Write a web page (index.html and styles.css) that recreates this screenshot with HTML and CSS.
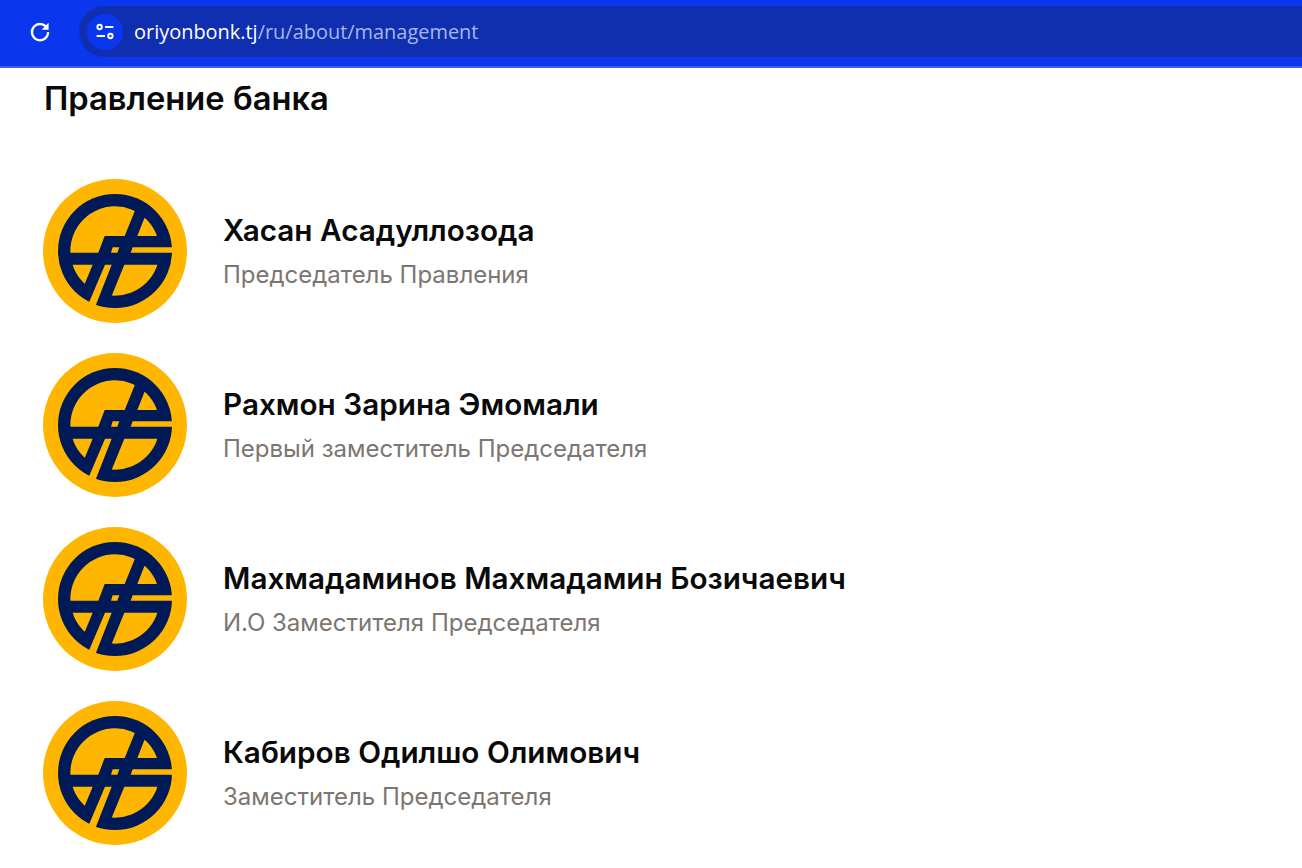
FILE: index.html
```html
<!DOCTYPE html>
<html lang="ru">
<head>
<meta charset="utf-8">
<title>Правление банка</title>
<link rel="stylesheet" href="styles.css">
</head>
<body>
<svg class="defs" width="0" height="0" aria-hidden="true">
  <defs>
    <clipPath id="inner"><circle cx="255" cy="243" r="134"/></clipPath>
    <symbol id="logo" viewBox="39 27 432 432">
      <circle cx="255" cy="243" r="216" fill="#ffb600"/>
      <circle cx="255" cy="243" r="171" fill="#001a57"/>
      <g fill="#ffb600" clip-path="url(#inner)">
        <polygon points="100,100 336,70 284,198 224,198 205,248 100,248"/>
        <polygon points="343,145 420,100 420,198 322,198"/>
        <polygon points="100,284 188,284 165,340 100,400"/>
        <polygon points="283,284 420,284 420,420 210,420 246,375"/>
      </g>
      <g fill="#ffb600">
        <polygon points="248,232 268,232 262,248 243,248"/>
        <polygon points="225,284 245,284 195,412 176,400"/>
        <polygon points="308,232 430,232 430,248 302,248"/>
      </g>
    </symbol>
  </defs>
</svg>
<header class="toolbar">
  <svg class="reload" viewBox="0 0 24 24" width="24" height="24" aria-hidden="true">
    <path d="M19.2 8.4A8.1 8.1 0 1 0 20.1 12" fill="none" stroke="#fff" stroke-width="2.3"/>
    <path d="M20.6 2.8V9.8H13.6Z" fill="#fff"/>
  </svg>
  <div class="omnibox">
    <span class="site-btn">
      <svg viewBox="0 0 20 20" width="20" height="20" aria-hidden="true">
        <circle cx="4.6" cy="5" r="2.2" fill="none" stroke="#fff" stroke-width="1.9"/>
        <path d="M10 5h8.4M1.6 14H10" stroke="#fff" stroke-width="2.1" fill="none"/>
        <circle cx="15.4" cy="14" r="2.2" fill="none" stroke="#fff" stroke-width="1.9"/>
      </svg>
    </span>
    <span class="url"><span class="host">oriyonbonk.tj</span>/ru/about/management</span>
  </div>
</header>
<main class="page">
  <h1 class="title">Правление банка</h1>
  <ul class="people">
    <li class="person">
      <svg class="avatar" aria-hidden="true"><use href="#logo"/></svg>
      <div class="info"><div class="name">Хасан Асадуллозода</div><div class="role">Председатель Правления</div></div>
    </li>
    <li class="person">
      <svg class="avatar" aria-hidden="true"><use href="#logo"/></svg>
      <div class="info"><div class="name">Рахмон Зарина Эмомали</div><div class="role">Первый заместитель Председателя</div></div>
    </li>
    <li class="person">
      <svg class="avatar" aria-hidden="true"><use href="#logo"/></svg>
      <div class="info"><div class="name">Махмадаминов Махмадамин Бозичаевич</div><div class="role">И.О Заместителя Председателя</div></div>
    </li>
    <li class="person">
      <svg class="avatar" aria-hidden="true"><use href="#logo"/></svg>
      <div class="info"><div class="name">Кабиров Одилшо Олимович</div><div class="role">Заместитель Председателя</div></div>
    </li>
  </ul>
</main>
</body>
</html>
```
FILE: styles.css
```css
* { box-sizing: border-box; }
html, body { margin: 0; padding: 0; height: 100%; overflow: hidden; background: #fff; }
body { font-family: Inter, "Liberation Sans", sans-serif; color: #0a0a0a; }
.defs { position: absolute; }
.toolbar {
  height: 68px;
  background: #0a37ee;
  border-bottom: 2px solid #3a5fe8;
  padding: 6px 0 9px 28px;
  display: flex;
  align-items: stretch;
}
.reload { align-self: center; margin-top: 1px; }
.omnibox {
  flex: 1;
  margin-left: 27px;
  background: #0f2fb0;
  border-radius: 26px 0 0 26px;
  display: flex;
  align-items: center;
  padding-left: 8px;
}
.site-btn {
  width: 36px;
  height: 36px;
  border-radius: 50%;
  background: #0a37ee;
  display: flex;
  align-items: center;
  justify-content: center;
}
.url {
  margin-left: 11px;
  font-family: "Open Sans", "Noto Sans", sans-serif;
  font-size: 19.95px;
  color: #a9b6ea;
}
.host { color: #fff; }
.page { padding: 9px 0 0 44px; }
.title { margin: 0; font-size: 32.7px; line-height: 42px; font-weight: 600; }
.people { list-style: none; margin: 60px 0 0 -1px; padding: 0; display: flex; flex-direction: column; gap: 30px; }
.person { display: flex; align-items: center; gap: 36px; }
.avatar { width: 144px; height: 144px; flex: none; }
.info { display: flex; flex-direction: column; gap: 12px; padding-top: 2px; }
.name { font-size: 29.7px; line-height: 34px; font-weight: 600; }
.role { font-size: 24px; line-height: 32px; color: #7c7570; }
```
